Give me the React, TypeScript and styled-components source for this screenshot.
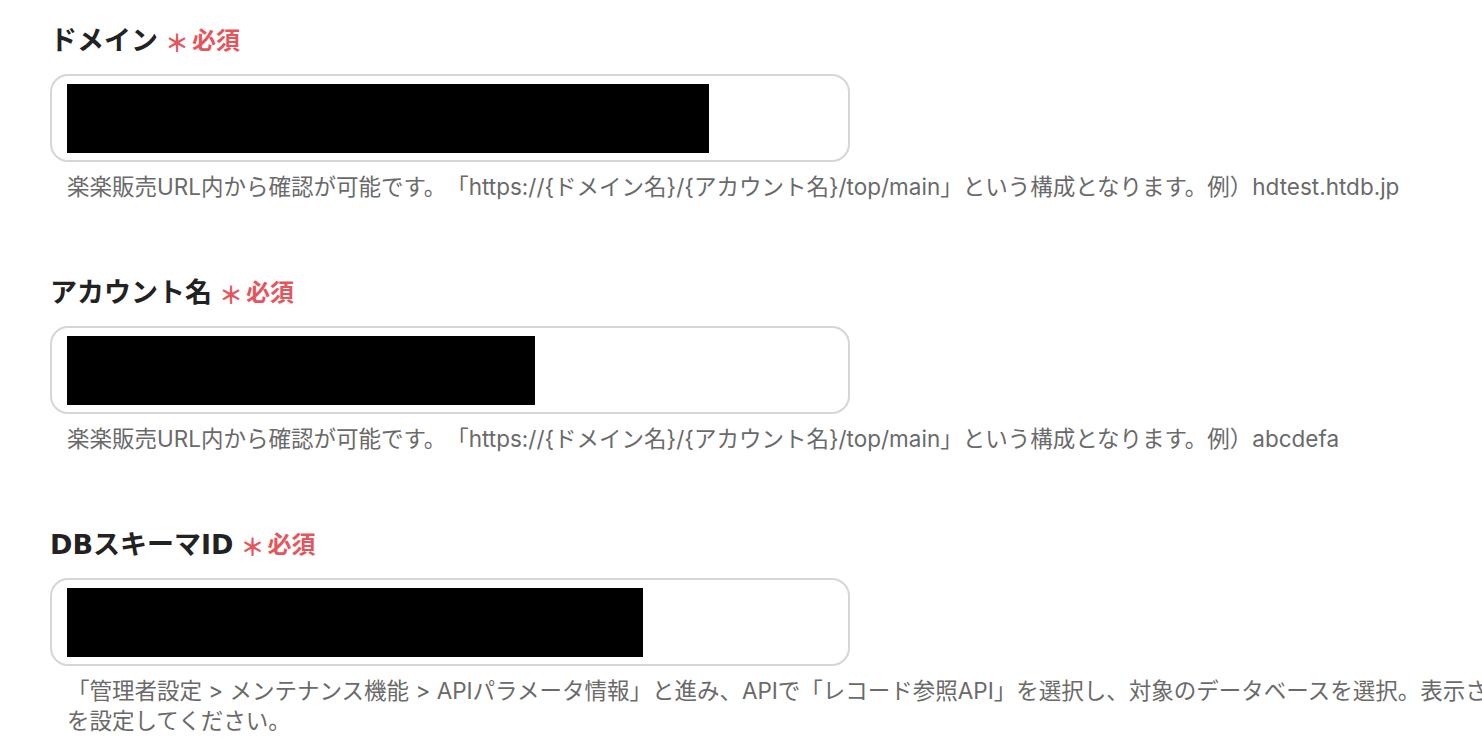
import React from "react";
import styled, { createGlobalStyle } from "styled-components";

const GlobalStyle = createGlobalStyle`
  html, body {
    margin: 0;
    padding: 0;
    background: #fff;
  }
  body {
    font-family: Inter, "Noto Sans CJK JP", sans-serif;
    overflow: hidden;
  }
`;

type Field = {
  label: string;
  redactWidth: number;
  help: React.ReactNode;
};

const fields: Field[] = [
  {
    label: "ドメイン",
    redactWidth: 642,
    help: "楽楽販売URL内から確認が可能です。「https://{ドメイン名}/{アカウント名}/top/main」という構成となります。例）hdtest.htdb.jp",
  },
  {
    label: "アカウント名",
    redactWidth: 468,
    help: "楽楽販売URL内から確認が可能です。「https://{ドメイン名}/{アカウント名}/top/main」という構成となります。例）abcdefa",
  },
  {
    label: "DBスキーマID",
    redactWidth: 576,
    help: (
      <>
        「管理者設定 &gt; メンテナンス機能 &gt; APIパラメータ情報」と進み、APIで「レコード参照API」を選択し、対象のデータベースを選択。表示されたDBスキーマID
        <br />
        を設定してください。
      </>
    ),
  },
];

const App = () => {
  return (
    <>
      <GlobalStyle />
      <Page>
        {fields.map((f) => (
          <FieldBlock key={f.label}>
            <Label>
              {f.label}
              <Asterisk>＊</Asterisk>
              <Required>必須</Required>
            </Label>
            <InputBox>
              <Redaction style={{ width: f.redactWidth }} />
            </InputBox>
            <HelpText>{f.help}</HelpText>
          </FieldBlock>
        ))}
      </Page>
    </>
  );
};

const Page = styled.div`
  width: 1482px;
  height: 754px;
  overflow: hidden;
  box-sizing: border-box;
  padding: 18px 0 0 50px;
  display: flex;
  flex-direction: column;
  gap: 68px;
`;

const FieldBlock = styled.div`
  display: flex;
  flex-direction: column;
`;

const Label = styled.div`
  display: flex;
  align-items: center;
  height: 40px;
  font-family: "DejaVu Sans", "Noto Sans CJK JP", sans-serif;
  font-size: 27px;
  font-weight: 700;
  color: #222;
  margin-bottom: 16px;
  white-space: nowrap;
`;

const Asterisk = styled.span`
  color: #e5555c;
  font-family: "Noto Sans CJK JP", sans-serif;
  font-size: 24px;
  font-weight: 700;
  margin-left: 7px;
  margin-top: 6px;
`;

const Required = styled.span`
  color: #e5555c;
  font-family: "Noto Sans CJK JP", sans-serif;
  font-size: 24px;
  font-weight: 700;
  margin-left: 3px;
`;

const InputBox = styled.div`
  box-sizing: border-box;
  width: 800px;
  height: 88px;
  border: 2px solid #d6d6d6;
  border-radius: 18px;
  display: flex;
  align-items: center;
  padding-left: 15px;
  margin-bottom: 10px;
`;

const Redaction = styled.div`
  height: 69px;
  background: #000;
`;

const HelpText = styled.div`
  padding-left: 17px;
  font-size: 22.5px;
  line-height: 30px;
  color: #6a6a6a;
  white-space: nowrap;
  text-spacing-trim: space-all;
`;

export default App;
